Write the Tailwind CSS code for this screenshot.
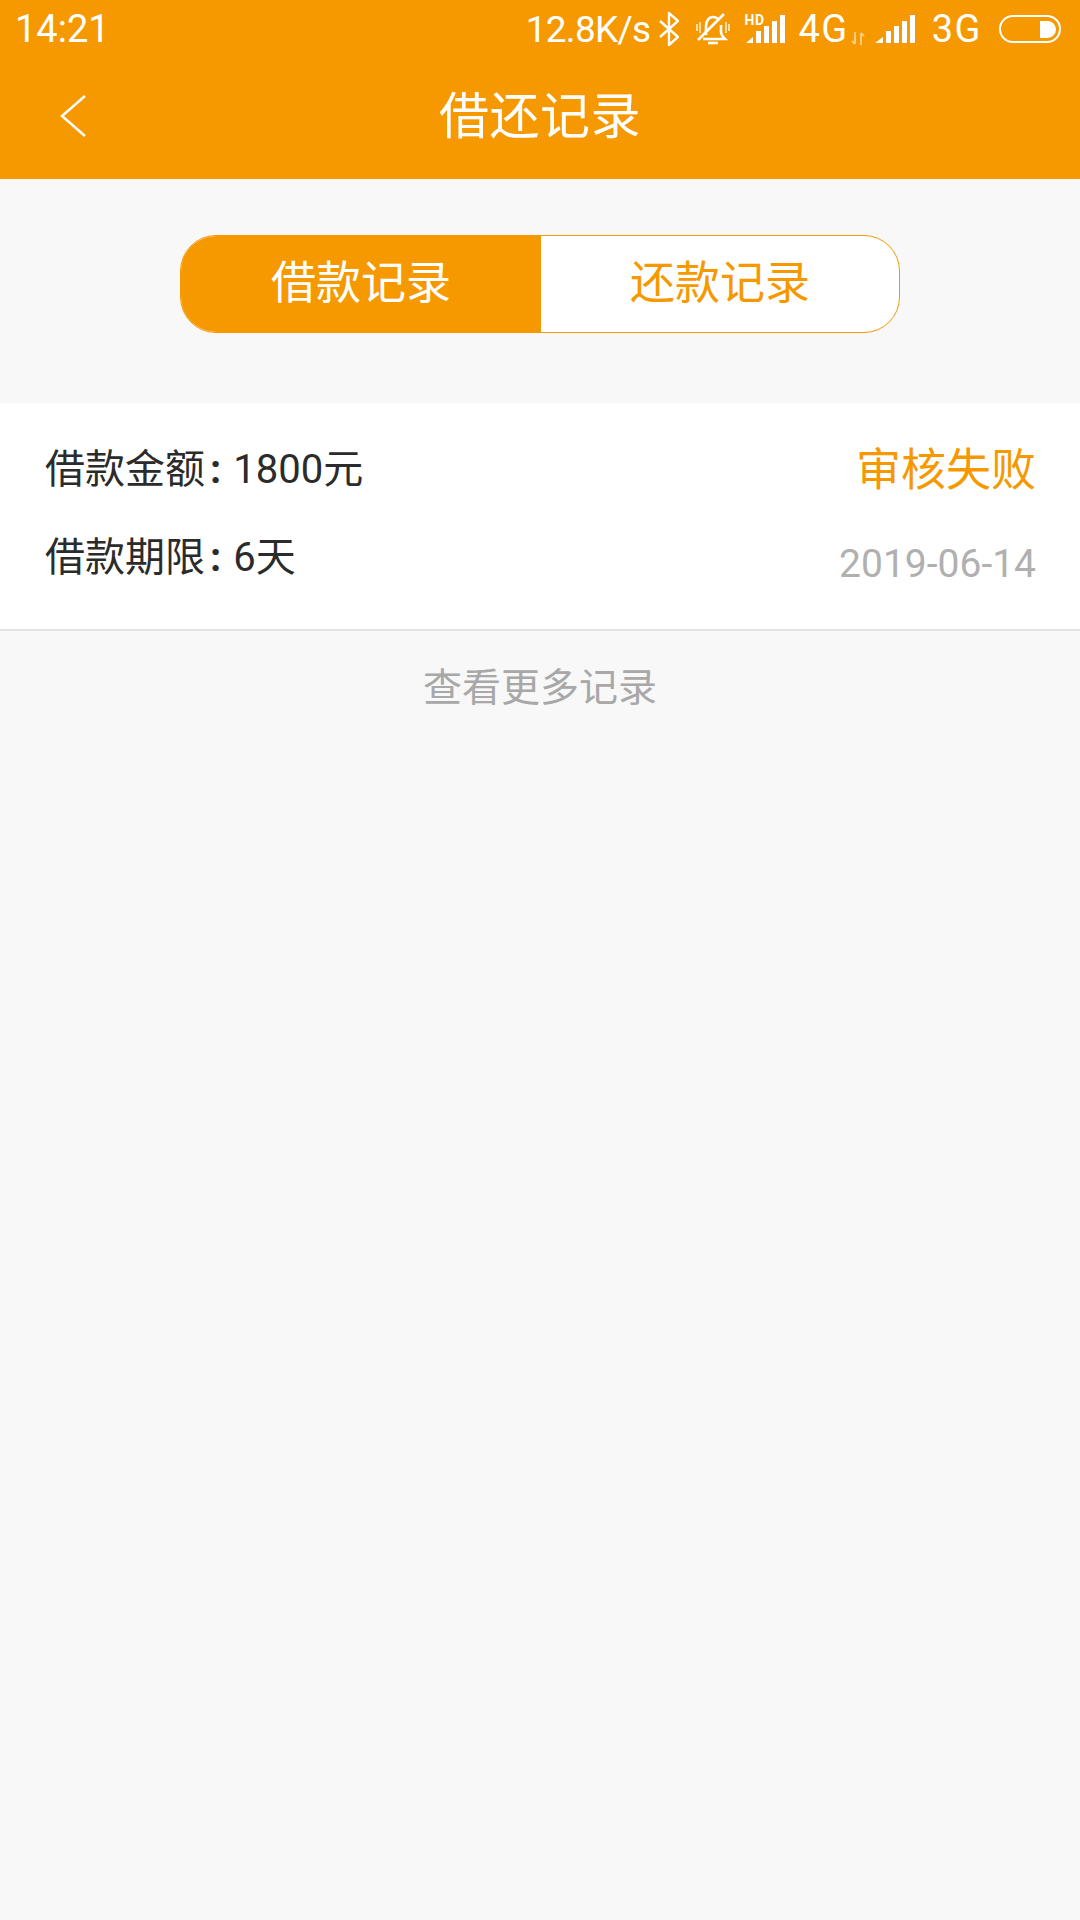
<!DOCTYPE html>
<html lang="zh-CN">
<head>
    <meta charset="UTF-8">
    <meta name="viewport" content="width=device-width, initial-scale=1.0">
    <title>借还记录</title>
    <script src="https://cdn.jsdelivr.net/npm/@tailwindcss/browser@4"></script>
</head>
<body class="bg-[#f8f8f8] font-['Roboto','Noto_Sans_CJK_SC',sans-serif] min-h-[1920px]">

    <!-- header -->
    <div class="bg-[#f69900] h-[179px] text-white">
        <div class="h-[58px] pl-[15px] pr-[19px] flex items-center justify-between">
            <span class="text-[38px] leading-none">14:21</span>
            <div class="flex items-center">
                <span class="text-[37px] leading-none tracking-[-0.7px]">12.8K/s</span>
                <svg class="ml-[8px]" width="20" height="34" viewBox="0 0 20 34" fill="none" stroke="white" stroke-width="2.400">
                    <path d="M1 9l18 16-9 8V1l9 8L1 25"/>
                </svg>
                <svg class="ml-[17px]" width="34" height="34" viewBox="0 0 34 34" fill="none" stroke="white" stroke-width="2.600">
                    <path d="M10 23V14c0-5 3-9 7-9 2.500 0 4.500 1 6 3M25 13v7c0 3 2 5 4 7H7"/>
                    <path d="M2 28L28 2"/>
                    <path d="M12 31h10" stroke-width="2.600"/>
                    <path d="M1 12v7M4 10v11M30 10v11M33 12v7" stroke-width="1.300"/>
                </svg>
                <div class="relative ml-[15px] w-[41px] h-[30px]">
                    <svg width="41" height="30" viewBox="0 0 41 30" fill="white">
                        <path d="M1 29l7-6v6zM11 17h5v12h-5zM19 12h5v17h-5zM27 7h5v22h-5zM35 1h5v28h-5z"/>
                    </svg>
                    <span class="absolute left-0 top-0 text-[14px] leading-[12px] font-bold tracking-[0.5px]">HD</span>
                </div>
                <span class="ml-[13px] text-[38px] leading-none tracking-[1.500px]">4G</span>
                <svg class="ml-[2px] mt-[18px]" width="14" height="13" viewBox="0 0 14 13" fill="none" stroke="white" stroke-opacity="0.5" stroke-width="2">
                    <path d="M4 0v12M1 9l3 3M10 13V1M13 4l-3-3"/>
                </svg>
                <svg class="ml-[10px]" width="40" height="30" viewBox="0 0 40 30" fill="white">
                    <path d="M0 29l8-6v6zM11 17h5v12h-5zM19 12h5v17h-5zM27 7h5v22h-5zM35 1h5v28h-5z"/>
                </svg>
                <span class="ml-[17px] text-[38px] leading-none tracking-[1.500px]">3G</span>
                <div class="ml-[17px] w-[62px] h-[28px] rounded-full border-[2.500px] border-white flex items-center justify-end pr-[3px]">
                    <div class="w-[16px] h-[17px] bg-white rounded-r-full rounded-l-[2px]"></div>
                </div>
            </div>
        </div>
        <div class="relative h-[121px] flex items-center justify-center">
            <svg class="absolute left-[59px] top-[36px]" width="28" height="44" viewBox="0 0 28 44" fill="none" stroke="white" stroke-width="2.500">
                <path d="M26 2L3 22l23 20"/>
            </svg>
            <h1 class="text-[50px] tracking-[0.5px] leading-none font-normal mb-[4px]">借还记录</h1>
        </div>
    </div>

    <!-- tabs -->
    <div class="h-[224px] pt-[56px]">
        <div class="w-[720px] h-[98px] mx-auto flex rounded-[36px] overflow-hidden border border-[#f69900] bg-white text-[45px]">
            <div class="w-[360px] bg-[#f69900] text-white flex items-center justify-center">借款记录</div>
            <div class="flex-1 text-[#f69900] flex items-center justify-center">还款记录</div>
        </div>
    </div>

    <!-- record -->
    <div class="bg-white h-[228px] border-b-2 border-[#e2e2e2] pl-[45px] pr-[44px] flex justify-between">
        <div class="text-[40px] leading-none text-[#2b2b2b] flex flex-col gap-[48px] pt-[47px]">
            <div>借款金额<span class="font-bold ml-[5px] mr-[2px]">:</span> 1800元</div>
            <div>借款期限<span class="font-bold ml-[5px] mr-[2px]">:</span> 6天</div>
        </div>
        <div class="flex flex-col items-end pt-[45px]">
            <span class="text-[45px] leading-none text-[#f69900]">审核失败</span>
            <span class="text-[39px] leading-none text-[#b0b0b0] mt-[52px]">2019-06-14</span>
        </div>
    </div>

    <div class="text-center text-[39px] leading-none text-[#a8a8a8] pt-[38px]">查看更多记录</div>

</body>
</html>
